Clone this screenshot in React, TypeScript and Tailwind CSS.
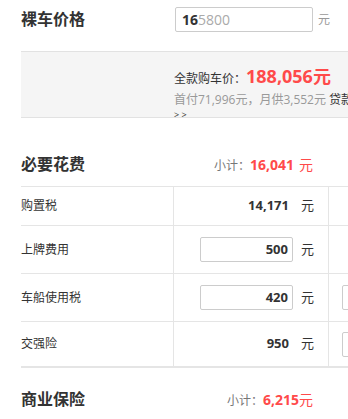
const font = { fontFamily: '"Open Sans", "Noto Sans CJK SC", sans-serif' };

type Row = {
  label: string;
  value: string;
  editable: boolean;
  extra: boolean;
  height: string;
};

const rows: Row[] = [
  { label: "购置税", value: "14,171", editable: false, extra: false, height: "h-[39px] border-b" },
  { label: "上牌费用", value: "500", editable: true, extra: false, height: "h-[48px] border-b" },
  { label: "车船使用税", value: "420", editable: true, extra: true, height: "h-[48px] border-b" },
  { label: "交强险", value: "950", editable: false, extra: true, height: "h-[46px] border-b-2" },
];

function SectionHeader({ title, total, spaced }: { title: string; total: string; spaced: boolean }) {
  return (
    <div className="flex w-[292px] items-center justify-between">
      <h2 className="text-[16px] leading-[24px] font-bold text-[#333]">{title}</h2>
      <div className="flex items-baseline">
        <span className="text-[12px] text-[#777]">小计：</span>
        <span className="text-[14px] font-bold text-[#ff4a4a]">{total}</span>
        <span className={`text-[14px] text-[#ff4a4a] ${spaced ? "ml-[5px]" : ""}`}>元</span>
      </div>
    </div>
  );
}

export default function App() {
  return (
    <div className="h-[419px] w-[348px] overflow-hidden bg-white" style={font}>
      <div className="w-[480px] pl-[21px]">
        {/* Bare car price */}
        <div className="flex h-[51px] items-start pt-[7px]">
          <h2 className="w-[154px] text-[16px] leading-[25px] font-bold text-[#333]">裸车价格</h2>
          <div className="flex h-[25px] w-[138px] items-center rounded-[2px] border border-[#ccc] px-[6px] text-[14px]">
            <span className="font-bold text-[#333]">16</span>
            <span className="text-[#aaa]">5800</span>
          </div>
          <span className="ml-[5px] text-[12px] leading-[25px] text-[#999]">元</span>
        </div>

        {/* Full price box */}
        <div className="h-[67px] overflow-hidden border-t border-b border-[#e2e2e2] bg-[#f5f5f5] pl-[153px] pt-[12px]">
          <div className="flex items-baseline leading-[24px]">
            <span className="text-[12px] text-[#333]">全款购车价：</span>
            <span className="text-[18px] font-bold text-[#ff4a4a]">188,056元</span>
          </div>
          <div className="text-[12px] leading-[18px] whitespace-nowrap text-[#999]">
            首付71,996元，月供3,552元 <span className="text-[#333]">贷款计算器</span>
          </div>
          <div className="text-[9px] leading-[11px] text-[#333]">&gt; &gt;</div>
        </div>

        {/* Required fees */}
        <div className="flex h-[68px] items-end pb-[10px]">
          <SectionHeader title="必要花费" total="16,041" spaced />
        </div>

        <div className="border-t border-[#e5e5e5]">
          {rows.map((r) => (
            <div key={r.label} className={`flex border-[#e5e5e5] ${r.height}`}>
              <div className="flex w-[152px] items-center text-[12px] text-[#333]">{r.label}</div>
              <div className="flex w-[155px] items-center justify-end gap-[8px] border-l border-[#e5e5e5] pr-[14px]">
                {r.editable ? (
                  <div className="flex h-[25px] w-[93px] items-center justify-end rounded-[2px] border border-[#ccc] pr-[4px] text-[13px] font-bold text-[#333]">
                    {r.value}
                  </div>
                ) : (
                  <span className="pr-[4px] text-[13px] font-bold text-[#333]">{r.value}</span>
                )}
                <span className="text-[13px] text-[#333]">元</span>
              </div>
              <div className="flex flex-1 items-center border-l border-[#e5e5e5] pl-[13px]">
                {r.extra && <div className="h-[25px] w-[93px] rounded-[2px] border border-[#ccc]" />}
              </div>
            </div>
          ))}
        </div>

        {/* Commercial insurance */}
        <div className="pt-[19px]">
          <SectionHeader title="商业保险" total="6,215" spaced={false} />
        </div>
      </div>
    </div>
  );
}
